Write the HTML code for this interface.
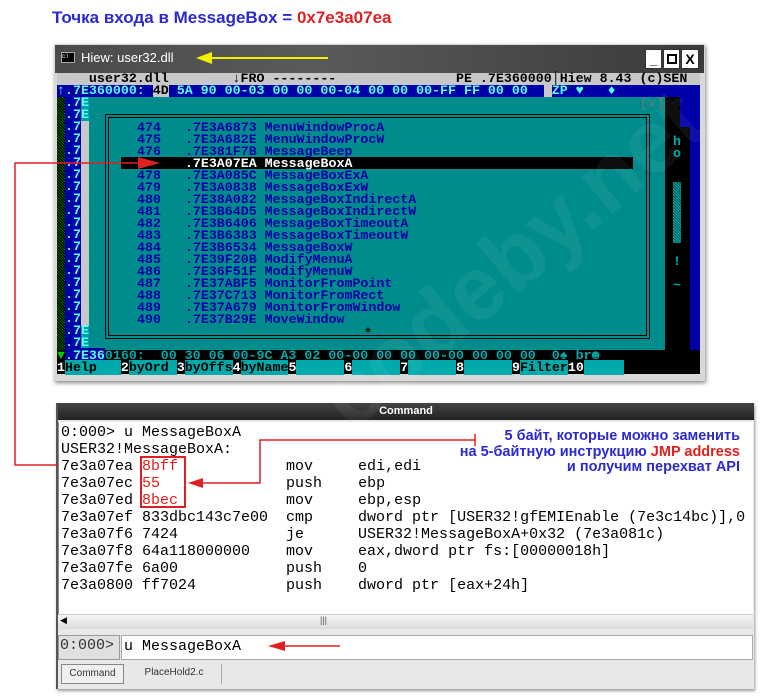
<!DOCTYPE html>
<html><head><meta charset="utf-8"><style>
*{margin:0;padding:0;box-sizing:border-box}
body{width:766px;height:698px;background:#fff;position:relative;overflow:hidden;font-family:"Liberation Sans",sans-serif}
.a{position:absolute;white-space:pre}
.m{font-family:"Liberation Mono",monospace;font-size:13.3px;line-height:12px;font-weight:bold}
.c{font-family:"Liberation Mono",monospace;font-size:15px;line-height:17px;color:#000}
</style></head><body>
<div class="a" style="left:52px;top:8px;font-size:17px;font-weight:bold;color:#2a2ad0">Точка входа в MessageBox = <span style="color:#e02020">0x7e3a07ea</span></div>

<!-- Hiew window -->
<div class="a" style="left:54px;top:44px;width:651px;height:337px;background:#d8d8d8;box-shadow:1px 2px 4px #888"></div>
<div class="a" style="left:55px;top:45px;width:649px;height:28px;background:linear-gradient(90deg,#4a4a4a,#5a5a5a 40%,#3a3a3a)"></div>
<div class="a" style="left:61px;top:52px;width:14px;height:11px;background:#000;border:1px solid #aaa;color:#fff;font-size:6px;line-height:9px">c:\</div>
<div class="a" style="left:81px;top:50px;color:#fff;font-size:13px">Hiew: user32.dll</div>
<div class="a" style="left:208px;top:57px;width:120px;height:2px;background:#f0f000"></div>
<div class="a" style="left:196px;top:52px;width:0;height:0;border-top:6px solid transparent;border-bottom:6px solid transparent;border-right:16px solid #f0f000"></div>
<div class="a" style="left:645px;top:49px;width:17px;height:20px;background:#fff;border:1px solid #333;font-weight:bold;text-align:center;font-size:13px;line-height:20px">_</div>
<div class="a" style="left:663px;top:49px;width:17px;height:20px;background:#fff;border:1px solid #333"><div style="margin:4px 3px;width:10px;height:10px;border:2px solid #000"></div></div>
<div class="a" style="left:681px;top:49px;width:18px;height:20px;background:#fff;border:1px solid #333;font-weight:bold;text-align:center;font-size:14px;line-height:19px">X</div>

<div class="a" style="left:57px;top:73px;width:643px;height:301px;background:#00a0a0"></div>
<div class="a m" style="left:57px;top:73px;width:643px;height:12px;background:#c8c8c8;color:#000">    user32.dll        ↓FRO --------               PE .7E360000│Hiew 8.43 (c)SEN</div>
<div class="a m" style="left:57px;top:85px;width:643px;height:12px;background:#0000a8;color:#5ff">↑.7E360000: <span style="background:#c8c8c8;color:#000">4D</span> 5A 90 00-03 00 00 00-04 00 00 00-FF FF 00 00  <span style="background:#c8c8c8;color:#000"> </span>ZP ♥   ♦</div>
<div class="a" style="left:57px;top:97px;width:8px;height:253px;background:repeating-linear-gradient(45deg,#006000 0 1px,#000 1px 2px)"></div>
<div class="a" style="left:65px;top:97px;width:16px;height:253px;background:#0000a8"></div>
<div class="a" style="left:81px;top:121px;width:8px;height:205px;background:#c8c8c8"></div>
<div class="a m" style="left:65px;top:97px;color:#5ff">.7E
.7E
.7
.7
.7
.7
.7
.7
.7
.7
.7
.7
.7
.7
.7
.7
.7
.7
.7
.7E
.7E</div>
<div class="a" style="left:665px;top:97px;width:25px;height:253px;background:#000"></div>
<div class="a" style="left:690px;top:85px;width:10px;height:265px;background:#0000a8"></div>
<div class="a" style="left:680px;top:97px;width:20px;height:30px;background:#0000a8"></div>
<div class="a m" style="left:673px;top:136px;color:#0aa">h
o</div>
<div class="a" style="left:673px;top:182px;width:8px;height:61px;background:repeating-linear-gradient(45deg,#0aa 0 1px,#055 1px 2px)"></div>
<div class="a m" style="left:673px;top:256px;color:#0aa">!

~</div>
<div class="a" style="left:89px;top:97px;width:576px;height:253px;background:#008c8c"></div>
<div class="a m" style="left:640px;top:98px;color:#777;font-weight:normal">[x]</div>
<div class="a" style="left:105px;top:114px;width:545px;height:225px;border:1px solid #000"></div>
<div class="a" style="left:108px;top:117px;width:539px;height:219px;border:1px solid #000"></div>
<div class="a m" style="left:364px;top:328px;color:#000">*</div>
<div class="a" style="left:121px;top:157px;width:512px;height:12px;background:#000"></div>
<div class="a m" style="left:137px;top:122px;color:#0000a8">474   .7E3A6873 MenuWindowProcA
475   .7E3A682E MenuWindowProcW
476   .7E381F7B MessageBeep
<span style="color:#fff">      .7E3A07EA MessageBoxA</span>
478   .7E3A085C MessageBoxExA
479   .7E3A0838 MessageBoxExW
480   .7E38A082 MessageBoxIndirectA
481   .7E3B64D5 MessageBoxIndirectW
482   .7E3B6406 MessageBoxTimeoutA
483   .7E3B6383 MessageBoxTimeoutW
484   .7E3B6534 MessageBoxW
485   .7E39F20B ModifyMenuA
486   .7E36F51F ModifyMenuW
487   .7E37ABF5 MonitorFromPoint
488   .7E37C713 MonitorFromRect
489   .7E37A679 MonitorFromWindow
490   .7E37B29E MoveWindow</div>
<div class="a m" style="left:57px;top:350px;width:643px;height:12px;background:#000;color:#0aa"><span style="color:#0c0">▼</span><span style="background:#0000a8;color:#5ff">.7E36</span>0160:  00 30 06 00-9C A3 02 00-00 00 00 00-00 00 00 00  0♠ br☻</div>
<div class="a m" style="left:57px;top:362px;width:643px;height:12px;background:#000;color:#fff">1<span style="background:#0aa;color:#000">Help   </span>2<span style="background:#0aa;color:#000">byOrd </span>3<span style="background:#0aa;color:#000">byOffs</span>4<span style="background:#0aa;color:#000">byName</span>5<span style="background:#0aa;color:#000">      </span>6<span style="background:#0aa;color:#000">      </span>7<span style="background:#0aa;color:#000">      </span>8<span style="background:#0aa;color:#000">      </span>9<span style="background:#0aa;color:#000">Filter</span>10<span style="background:#0aa;color:#000">     </span></div>

<!-- Command window -->
<div class="a" style="left:56px;top:403px;width:698px;height:286px;background:#e8e8e8;border-left:2px solid #555;box-shadow:1px 2px 3px #999"></div>
<div class="a" style="left:58px;top:403px;width:696px;height:17px;background:linear-gradient(#444,#222);color:#fff;font-size:11px;font-weight:bold;text-align:center;line-height:17px">Command</div>
<div class="a" style="left:58px;top:422px;width:695px;height:193px;background:#fff;border-left:1px solid #888"></div>
<div class="a c" style="left:61px;top:424px">0:000&gt; u MessageBoxA
USER32!MessageBoxA:
7e3a07ea <span style="color:#e02020">8bff</span>            mov     edi,edi
7e3a07ec <span style="color:#e02020">55</span>              push    ebp
7e3a07ed <span style="color:#e02020">8bec</span>            mov     ebp,esp
7e3a07ef 833dbc143c7e00  cmp     dword ptr [USER32!gfEMIEnable (7e3c14bc)],0
7e3a07f6 7424            je      USER32!MessageBoxA+0x32 (7e3a081c)
7e3a07f8 64a118000000    mov     eax,dword ptr fs:[00000018h]
7e3a07fe 6a00            push    0
7e3a0800 ff7024          push    dword ptr [eax+24h]</div>
<div class="a" style="left:140px;top:456px;width:46px;height:52px;border:2px solid #e02020"></div>
<div class="a" style="left:58px;top:614px;width:695px;height:15px;background:linear-gradient(#f4f4f4,#dcdcdc);border-top:1px solid #ccc"></div>
<div class="a" style="left:60px;top:615px;font-size:9px">◀</div>
<div class="a" style="left:320px;top:615px;font-size:9px;color:#555">|||</div>
<div class="a" style="left:58px;top:635px;width:62px;height:25px;background:#e0e0e0;border:1px solid #999"></div>
<div class="a c" style="left:60px;top:637px;color:#333">0:000&gt;</div>
<div class="a" style="left:121px;top:635px;width:632px;height:25px;background:#fff;border:1px solid #aaa"></div>
<div class="a c" style="left:124px;top:638px">u MessageBoxA</div>
<div class="a" style="left:58px;top:661px;width:695px;height:25px;background:#e8e8e8"></div>
<div class="a" style="left:61px;top:664px;width:63px;height:20px;border:1px solid #888;background:#f0f0f0;font-size:10px;line-height:18px;text-align:center;color:#333">Command</div>
<div class="a" style="left:127px;top:664px;width:95px;height:20px;border-right:1px solid #aaa;font-size:10px;line-height:18px;text-align:center;color:#333">PlaceHold2.c</div>

<div class="a" style="left:340px;top:429px;width:400px;text-align:right;font-size:14.5px;font-weight:bold;color:#2a2ad0;line-height:15.5px;white-space:normal">5 байт, которые можно заменить<br>на 5-байтную инструкцию <span style="color:#e02020">JMP address</span><br>и получим перехват API</div>

<svg class="a" style="left:0;top:0" width="766" height="698">
<g stroke="#e02020" stroke-width="1.5" fill="none">
<polyline points="58,465 15,465 15,163 140,163"/>
<polyline points="475,440 260,440 260,483 200,483"/>
<line x1="475" y1="434" x2="475" y2="446"/>
<line x1="280" y1="646" x2="340" y2="646"/>
</g>
<g fill="#e02020">
<polygon points="160,163 138,157 138,169"/>
<polygon points="188,483 203,478 203,488"/>
<polygon points="268,646 285,641 285,651"/>
</g>
</svg>
<div class="a" style="left:300px;top:370px;font-size:90px;font-weight:bold;color:rgba(255,255,255,0.06);transform:rotate(-40deg);transform-origin:left top">codeby.net</div>
</body></html>
